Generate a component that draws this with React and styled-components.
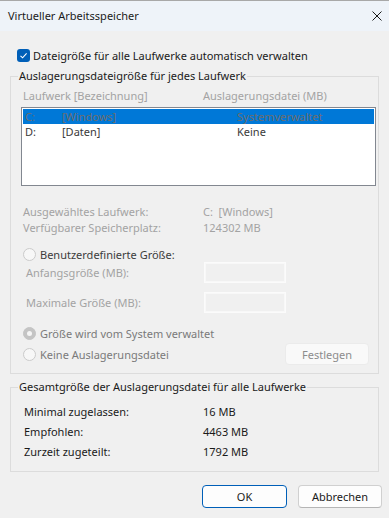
import React from 'react';
import styled, { createGlobalStyle } from 'styled-components';

const GlobalStyle = createGlobalStyle`
  html, body {
    margin: 0;
    padding: 0;
    background: #f0f0f0;
  }
  body {
    font-family: "Noto Sans", "Segoe UI", sans-serif;
    font-size: 11px;
    color: #1a1a1a;
  }
`;

const drives = [
  { letter: 'C:', label: '[Windows]', size: 'Systemverwaltet', selected: true },
  { letter: 'D:', label: '[Daten]', size: 'Keine' },
];

const totals = [
  ['Minimal zugelassen:', '16 MB'],
  ['Empfohlen:', '4463 MB'],
  ['Zurzeit zugeteilt:', '1792 MB'],
];

const CloseIcon = () => (
  <svg width="10" height="10" viewBox="0 0 10 10">
    <path d="M0.5 0.5 L9.5 9.5 M9.5 0.5 L0.5 9.5" stroke="#1a1a1a" strokeWidth="1" fill="none" />
  </svg>
);

const CheckIcon = () => (
  <svg width="9" height="9" viewBox="0 0 9 9">
    <path d="M1.5 4.8 L3.6 6.8 L7.6 2.4" stroke="#fff" strokeWidth="1.1" fill="none" />
  </svg>
);

export default function App() {
  return (
    <>
      <GlobalStyle />
      <Window>
        <TitleBar>
          <Title>Virtueller Arbeitsspeicher</Title>
          <CloseButton><CloseIcon /></CloseButton>
        </TitleBar>
        <Body>
          <CheckRow>
            <CheckBox><CheckIcon /></CheckBox>
            <span>Dateigröße für alle Laufwerke automatisch verwalten</span>
          </CheckRow>

          <Group>
            <Legend>Auslagerungsdateigröße für jedes Laufwerk</Legend>
            <GroupBody>
              <ColumnHeader>
                <span>Laufwerk [Bezeichnung]</span>
                <span>Auslagerungsdatei (MB)</span>
              </ColumnHeader>
              <ListBox>
                {drives.map((d) => (
                  <DriveRow key={d.letter} $selected={d.selected}>
                    <span>{d.letter}</span>
                    <span>{d.label}</span>
                    <span>{d.size}</span>
                  </DriveRow>
                ))}
              </ListBox>

              <InfoGrid>
                <span>Ausgewähltes Laufwerk:</span>
                <span>C:&nbsp; [Windows]</span>
                <span>Verfügbarer Speicherplatz:</span>
                <span>124302 MB</span>
              </InfoGrid>

              <RadioRow $top={10} $tone="#3c3c3c">
                <Radio />
                <span>Benutzerdefinierte Größe:</span>
              </RadioRow>
              <FieldRow $top={0}>
                <FieldLabel>Anfangsgröße (MB):</FieldLabel>
                <TextBox />
              </FieldRow>
              <FieldRow $top={9}>
                <FieldLabel>Maximale Größe (MB):</FieldLabel>
                <TextBox />
              </FieldRow>
              <RadioRow $top={12} $tone="#7a7a7a">
                <Radio $checked />
                <span>Größe wird vom System verwaltet</span>
              </RadioRow>
              <LastRow>
                <RadioRow $top={0} $tone="#7a7a7a">
                  <Radio />
                  <span>Keine Auslagerungsdatei</span>
                </RadioRow>
                <SetButton>Festlegen</SetButton>
              </LastRow>
            </GroupBody>
          </Group>

          <Group $top={5}>
            <Legend>Gesamtgröße der Auslagerungsdatei für alle Laufwerke</Legend>
            <GroupBody $pad="6px 2px 10px 13px">
              <TotalsGrid>
                {totals.map(([k, v]) => (
                  <React.Fragment key={k}>
                    <span>{k}</span>
                    <span>{v}</span>
                  </React.Fragment>
                ))}
              </TotalsGrid>
            </GroupBody>
          </Group>

          <ButtonBar>
            <DialogButton $default>OK</DialogButton>
            <DialogButton>Abbrechen</DialogButton>
          </ButtonBar>
        </Body>
      </Window>
    </>
  );
}

const Window = styled.div`
  width: 389px;
  height: 518px;
  background: #f0f0f0;
  display: flex;
  flex-direction: column;
  overflow: hidden;
`;

const TitleBar = styled.div`
  height: 31px;
  box-sizing: border-box;
  border-top: 1px solid #a8a8a8;
  background: #eef3f9;
  display: flex;
  align-items: center;
  justify-content: space-between;
  padding: 0 7px 0 8px;
`;

const Title = styled.span`
  color: #1a1a1a;
  line-height: 16px;
`;

const CloseButton = styled.div`
  display: flex;
  width: 10px;
  height: 10px;
`;

const Body = styled.div`
  padding: 0 10px;
  display: flex;
  flex-direction: column;
`;

const CheckRow = styled.div`
  margin-top: 16px;
  height: 16px;
  display: flex;
  align-items: center;
  gap: 3px;
  padding-left: 7px;
  color: #1a1a1a;
`;

const CheckBox = styled.span`
  width: 13px;
  height: 13px;
  border-radius: 3px;
  background: #005fb8;
  display: flex;
  align-items: center;
  justify-content: center;
`;

const Group = styled.fieldset`
  margin: ${(p) => p.$top ?? 5}px 0 0;
  padding: 0;
  border: 1px solid #dcdcdc;
  min-width: 0;
`;

const Legend = styled.legend`
  margin-left: 7px;
  padding: 0 1px;
  line-height: 16px;
  color: #1a1a1a;
`;

const GroupBody = styled.div`
  padding: ${(p) => p.$pad ?? '4px 2px 8px 10px'};
`;

const ColumnHeader = styled.div`
  display: grid;
  grid-template-columns: 180px 1fr;
  padding-left: 2px;
  line-height: 16px;
  color: #a3a3a3;
`;

const ListBox = styled.div`
  margin-top: 3px;
  height: 79px;
  box-sizing: border-box;
  border: 1px solid #828790;
  background: #fff;
  padding: 1px;
`;

const DriveRow = styled.div`
  display: grid;
  grid-template-columns: 37px 175px 1fr;
  height: 15px;
  line-height: 15px;
  padding-left: 2px;
  background: ${(p) => (p.$selected ? '#0078d7' : 'transparent')};
  color: ${(p) => (p.$selected ? '#6d6d6d' : '#3a3a3a')};
`;

const InfoGrid = styled.div`
  margin-top: 18px;
  display: grid;
  grid-template-columns: 180px 1fr;
  padding-left: 2px;
  line-height: 16px;
  color: #a3a3a3;
`;

const RadioRow = styled.div`
  margin-top: ${(p) => p.$top}px;
  height: 16px;
  display: flex;
  align-items: center;
  gap: 4px;
  padding-left: 2px;
  color: ${(p) => p.$tone};
`;

const Radio = styled.span`
  width: 13px;
  height: 13px;
  box-sizing: border-box;
  border-radius: 50%;
  border: 1px solid ${(p) => (p.$checked ? '#c4c4c4' : '#cbcbcb')};
  background: ${(p) => (p.$checked ? '#c4c4c4' : '#f7f7f7')};
  display: flex;
  align-items: center;
  justify-content: center;

  &::after {
    content: '';
    display: ${(p) => (p.$checked ? 'block' : 'none')};
    width: 5px;
    height: 5px;
    border-radius: 50%;
    background: #f5f5f5;
  }
`;

const FieldRow = styled.div`
  margin-top: ${(p) => p.$top}px;
  height: 21px;
  display: grid;
  grid-template-columns: 183px 82px;
  align-items: center;
`;

const FieldLabel = styled.span`
  padding-left: 5px;
  color: #a3a3a3;
`;

const TextBox = styled.div`
  height: 21px;
  box-sizing: border-box;
  border: 1px solid #fbfbfb;
  box-shadow: inset 0 0 0 1px #f8f8f8;
  background: #f0f0f0;
`;

const LastRow = styled.div`
  margin-top: 2px;
  height: 22px;
  display: flex;
  align-items: center;
  justify-content: space-between;
  padding-right: 7px;
`;

const SetButton = styled.div`
  width: 84px;
  height: 22px;
  box-sizing: border-box;
  border: 1px solid #ebebeb;
  border-radius: 4px;
  background: #f9f9f9;
  color: #8c8c8c;
  display: flex;
  align-items: center;
  justify-content: center;
`;

const TotalsGrid = styled.div`
  display: grid;
  grid-template-columns: 179px 1fr;
  grid-auto-rows: 20px;
  align-items: center;
  color: #1a1a1a;
`;

const ButtonBar = styled.div`
  margin-top: 13px;
  margin-right: -3px;
  display: flex;
  justify-content: flex-end;
  gap: 11px;
`;

const DialogButton = styled.div`
  width: ${(p) => (p.$default ? 85 : 84)}px;
  height: 23px;
  box-sizing: border-box;
  border: 1px solid ${(p) => (p.$default ? '#005fb8' : '#d0d0d0')};
  border-bottom-color: ${(p) => (p.$default ? '#005fb8' : '#b5b5b5')};
  border-radius: 4px;
  background: #fdfdfd;
  color: #1a1a1a;
  display: flex;
  align-items: center;
  justify-content: center;
`;
